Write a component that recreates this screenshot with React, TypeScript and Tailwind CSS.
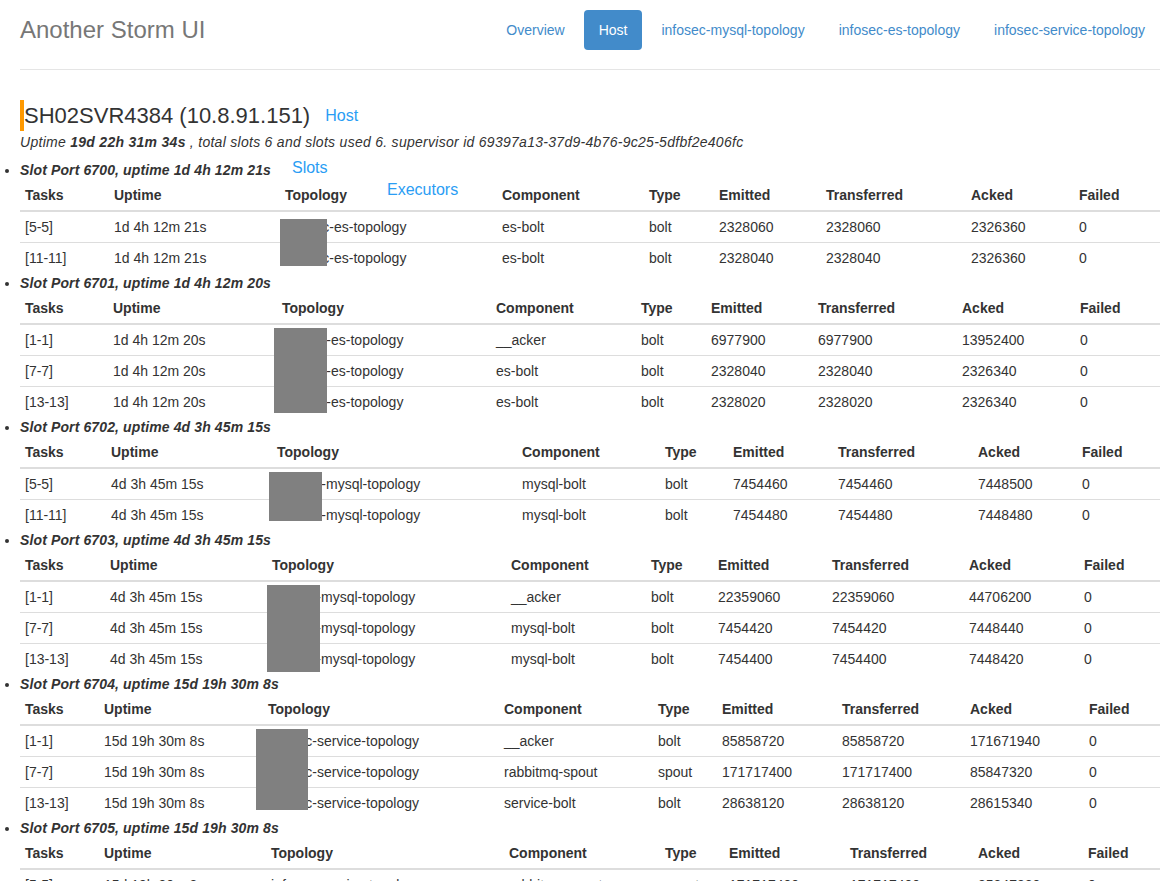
import React from 'react'

type Row = string[]

interface Slot {
    port: number
    uptime: string
    cols: string[]
    rows: Row[]
    box?: string
}

const headers = ['Tasks', 'Uptime', 'Topology', 'Component', 'Type', 'Emitted', 'Transferred', 'Acked', 'Failed']

const navItems = ['Overview', 'Host', 'infosec-mysql-topology', 'infosec-es-topology', 'infosec-service-topology']

// column widths measured per table (auto layout in the original)
const slots: Slot[] = [
    {
        port: 6700,
        uptime: '1d 4h 12m 21s',
        cols: ['w-[89px]', 'w-[171px]', 'w-[217px]', 'w-[147px]', 'w-[70px]', 'w-[107px]', 'w-[145px]', 'w-[108px]', 'w-[86px]'],
        box: 'left-[260px] top-[39px] w-[47px] h-[47px]',
        rows: [
            ['[5-5]', '1d 4h 12m 21s', 'infosec-es-topology', 'es-bolt', 'bolt', '2328060', '2328060', '2326360', '0'],
            ['[11-11]', '1d 4h 12m 21s', 'infosec-es-topology', 'es-bolt', 'bolt', '2328040', '2328040', '2326360', '0'],
        ],
    },
    {
        port: 6701,
        uptime: '1d 4h 12m 20s',
        cols: ['w-[88px]', 'w-[169px]', 'w-[214px]', 'w-[145px]', 'w-[70px]', 'w-[107px]', 'w-[144px]', 'w-[118px]', 'w-[85px]'],
        box: 'left-[254px] top-[35px] w-[53px] h-[85px]',
        rows: [
            ['[1-1]', '1d 4h 12m 20s', 'infosec-es-topology', '__acker', 'bolt', '6977900', '6977900', '13952400', '0'],
            ['[7-7]', '1d 4h 12m 20s', 'infosec-es-topology', 'es-bolt', 'bolt', '2328040', '2328040', '2326340', '0'],
            ['[13-13]', '1d 4h 12m 20s', 'infosec-es-topology', 'es-bolt', 'bolt', '2328020', '2328020', '2326340', '0'],
        ],
    },
    {
        port: 6702,
        uptime: '4d 3h 45m 15s',
        cols: ['w-[86px]', 'w-[166px]', 'w-[245px]', 'w-[143px]', 'w-[68px]', 'w-[105px]', 'w-[140px]', 'w-[104px]', 'w-[83px]'],
        box: 'left-[249px] top-[35px] w-[53px] h-[49px]',
        rows: [
            ['[5-5]', '4d 3h 45m 15s', 'infosec-mysql-topology', 'mysql-bolt', 'bolt', '7454460', '7454460', '7448500', '0'],
            ['[11-11]', '4d 3h 45m 15s', 'infosec-mysql-topology', 'mysql-bolt', 'bolt', '7454480', '7454480', '7448480', '0'],
        ],
    },
    {
        port: 6703,
        uptime: '4d 3h 45m 15s',
        cols: ['w-[85px]', 'w-[162px]', 'w-[239px]', 'w-[140px]', 'w-[67px]', 'w-[114px]', 'w-[137px]', 'w-[115px]', 'w-[81px]'],
        box: 'left-[247px] top-[35px] w-[53px] h-[87px]',
        rows: [
            ['[1-1]', '4d 3h 45m 15s', 'infosec-mysql-topology', '__acker', 'bolt', '22359060', '22359060', '44706200', '0'],
            ['[7-7]', '4d 3h 45m 15s', 'infosec-mysql-topology', 'mysql-bolt', 'bolt', '7454420', '7454420', '7448440', '0'],
            ['[13-13]', '4d 3h 45m 15s', 'infosec-mysql-topology', 'mysql-bolt', 'bolt', '7454400', '7454400', '7448420', '0'],
        ],
    },
    {
        port: 6704,
        uptime: '15d 19h 30m 8s',
        cols: ['w-[79px]', 'w-[164px]', 'w-[236px]', 'w-[154px]', 'w-[64px]', 'w-[120px]', 'w-[128px]', 'w-[119px]', 'w-[76px]'],
        box: 'left-[236px] top-[35px] w-[52px] h-[81px]',
        rows: [
            ['[1-1]', '15d 19h 30m 8s', 'infosec-service-topology', '__acker', 'bolt', '85858720', '85858720', '171671940', '0'],
            ['[7-7]', '15d 19h 30m 8s', 'infosec-service-topology', 'rabbitmq-spout', 'spout', '171717400', '171717400', '85847320', '0'],
            ['[13-13]', '15d 19h 30m 8s', 'infosec-service-topology', 'service-bolt', 'bolt', '28638120', '28638120', '28615340', '0'],
        ],
    },
    {
        port: 6705,
        uptime: '15d 19h 30m 8s',
        cols: ['w-[79px]', 'w-[167px]', 'w-[238px]', 'w-[156px]', 'w-[64px]', 'w-[121px]', 'w-[128px]', 'w-[110px]', 'w-[77px]'],
        rows: [
            ['[5-5]', '15d 19h 30m 8s', 'infosec-service-topology', 'rabbitmq-spout', 'spout', '171717400', '171717400', '85847320', '0'],
            ['[11-11]', '15d 19h 30m 8s', 'infosec-service-topology', 'rabbitmq-spout', 'spout', '171717400', '171717400', '85847320', '0'],
        ],
    },
]

const Header: React.FC = () => (
    <div className="flex items-start justify-between border-b border-[#e5e5e5] pt-[10px] pb-[19px]">
        <h3 className="text-[24px] leading-[40px] text-[#777]">Another Storm UI</h3>
        <ul className="flex gap-[4px]">
            {navItems.map((item) => (
                <li key={item}>
                    <a
                        className={
                            item === 'Host'
                                ? 'block rounded-[4px] bg-[#428bca] px-[15px] py-[10px] leading-5 text-white'
                                : 'block rounded-[4px] px-[15px] py-[10px] leading-5 text-[#428bca]'
                        }
                    >
                        {item}
                    </a>
                </li>
            ))}
        </ul>
    </div>
)

const SlotTable: React.FC<{ slot: Slot; first: boolean }> = ({ slot, first }) => (
    <li>
        <div className="flex items-center">
            <b className="italic tracking-[0.12px]">
                Slot Port {slot.port}, uptime {slot.uptime}
            </b>
            {first && <span className="ml-[21px] -mt-[4px] text-[16px] leading-5 text-[#2a9df4]">Slots</span>}
        </div>
        <div className="relative">
            <table className="w-[1140px] table-fixed border-collapse">
                <colgroup>
                    {slot.cols.map((c, i) => (
                        <col key={i} className={c} />
                    ))}
                </colgroup>
                <thead>
                    <tr>
                        {headers.map((h) => (
                            <th key={h} className="border-b-2 border-[#ddd] p-[5px] text-left font-bold leading-5">
                                {h}
                            </th>
                        ))}
                    </tr>
                </thead>
                <tbody>
                    {slot.rows.map((r, i) => (
                        <tr key={i}>
                            {r.map((cell, j) => (
                                <td key={j} className="border-t border-[#ddd] p-[5px] leading-5 whitespace-nowrap">
                                    {cell}
                                </td>
                            ))}
                        </tr>
                    ))}
                </tbody>
            </table>
            {/* redacted topology prefix */}
            {slot.box && <div className={`absolute bg-[#808080] ${slot.box}`} />}
            {first && (
                <span className="absolute left-[367px] top-0 text-[16px] leading-5 text-[#2a9df4]">Executors</span>
            )}
        </div>
    </li>
)

const App: React.FC = () => {
    return (
        <div className="min-h-screen bg-white font-['Liberation_Sans',Arial,sans-serif] text-[14px] leading-5 text-[#333]">
            <div className="ml-[20px] w-[1140px]">
                <Header />

                <div className="mt-[30px] flex items-center">
                    <h2 className="border-l-4 border-[#f90] text-[22px] leading-[31px] text-[#333]">SH02SVR4384 (10.8.91.151)</h2>
                    <span className="ml-[15px] text-[16px] text-[#2a9df4]">Host</span>
                </div>
                <p className="mt-[1px] italic tracking-[0.28px]">
                    Uptime <b>19d 22h 31m 34s</b> , total slots 6 and slots used 6. supervisor id
                    69397a13-37d9-4b76-9c25-5dfbf2e406fc
                </p>

                <ul className="mt-[8px] list-disc">
                    {slots.map((s, i) => (
                        <SlotTable key={s.port} slot={s} first={i === 0} />
                    ))}
                </ul>
            </div>
        </div>
    )
}

export default App
